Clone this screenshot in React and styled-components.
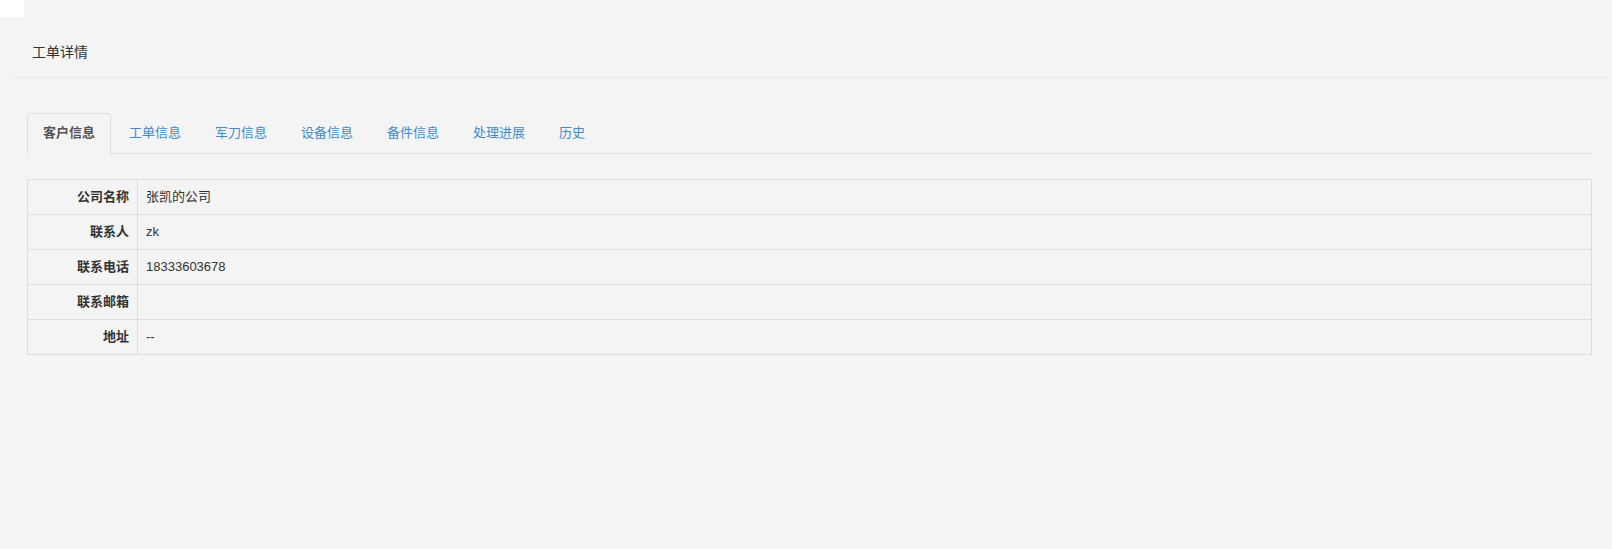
import React from "react";
import styled, { createGlobalStyle } from "styled-components";

const GlobalStyle = createGlobalStyle`
  html, body {
    margin: 0;
    padding: 0;
    background: #f4f4f4;
  }
  body {
    font-family: "Liberation Sans", Arial, "Noto Sans CJK SC", sans-serif;
    font-size: 13px;
    color: #333;
  }
  * { box-sizing: border-box; }
`;

const Page = styled.div`
  min-height: 549px;
  background: #f4f4f4;
`;

const Corner = styled.div`
  width: 24px;
  height: 17px;
  background: #fff;
`;

const Header = styled.div`
  margin: 0 5px 0 12px;
  padding: 25px 20px 15px;
  border-bottom: 1px dotted #ddd;
`;

const Title = styled.h3`
  margin: 0;
  font-size: 14px;
  line-height: 20px;
  font-weight: normal;
  color: #333;
`;

const Body = styled.div`
  padding: 35px 20px 0 27px;
`;

const Tabs = styled.ul`
  display: flex;
  list-style: none;
  margin: 0;
  padding: 0;
  border-bottom: 1px solid #ddd;
`;

const Tab = styled.li`
  margin: 0 2px -1px 0;
  padding: 10px 15px;
  font-size: 13px;
  line-height: 18.57px;
  border: 1px solid ${(p) => (p.$active ? "#ddd" : "transparent")};
  border-bottom-color: ${(p) => (p.$active ? "#f4f4f4" : "transparent")};
  border-radius: 4px 4px 0 0;
  background: ${(p) => (p.$active ? "#f4f4f4" : "transparent")};
  color: ${(p) => (p.$active ? "#555" : "#428bca")};
  font-weight: ${(p) => (p.$active ? "bold" : "normal")};
  cursor: pointer;
  white-space: nowrap;
`;

const Table = styled.table`
  width: 100%;
  margin-top: 25px;
  border-collapse: collapse;
  border: 1px solid #ddd;
`;

const Row = styled.tr``;

const Cell = styled.td`
  padding: 8px;
  font-size: 13px;
  line-height: 18px;
  border: 1px solid #ddd;
  vertical-align: middle;
  color: #333;
  text-align: ${(p) => (p.$label ? "right" : "left")};
  font-weight: ${(p) => (p.$label ? "bold" : "normal")};
  width: ${(p) => (p.$label ? "110px" : "auto")};
`;

const tabs = ["客户信息", "工单信息", "军刀信息", "设备信息", "备件信息", "处理进展", "历史"];

const rows = [
  ["公司名称", "张凯的公司"],
  ["联系人", "zk"],
  ["联系电话", "18333603678"],
  ["联系邮箱", ""],
  ["地址", "--"],
];

export default function App() {
  return (
    <Page>
      <GlobalStyle />
      <Corner />
      <Header>
        <Title>工单详情</Title>
      </Header>
      <Body>
        <Tabs>
          {tabs.map((t, i) => (
            <Tab key={t} $active={i === 0}>
              {t}
            </Tab>
          ))}
        </Tabs>
        <Table>
          <tbody>
            {rows.map(([k, v]) => (
              <Row key={k}>
                <Cell $label>{k}</Cell>
                <Cell>{v}</Cell>
              </Row>
            ))}
          </tbody>
        </Table>
      </Body>
    </Page>
  );
}
